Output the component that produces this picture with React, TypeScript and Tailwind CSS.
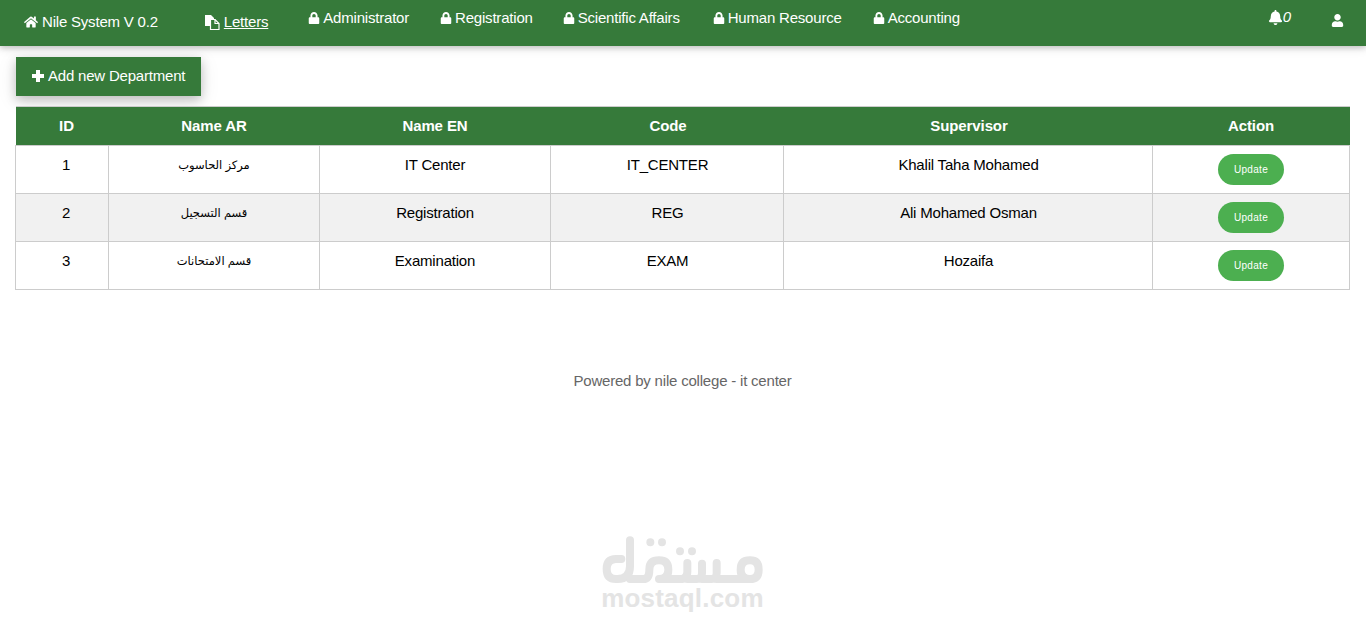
import { FaHome, FaLock, FaBell, FaUser } from "react-icons/fa";

const locked = [
  { name: "Administrator", cls: "ml-[40px]" },
  { name: "Registration", cls: "ml-[31px]" },
  { name: "Scientific Affairs", cls: "ml-[30px]" },
  { name: "Human Resource", cls: "ml-[33px]" },
  { name: "Accounting", cls: "ml-[31px]" },
];

const rows = [
  { id: "1", ar: "مركز الحاسوب", en: "IT Center", code: "IT_CENTER", sup: "Khalil Taha Mohamed" },
  { id: "2", ar: "قسم التسجيل", en: "Registration", code: "REG", sup: "Ali Mohamed Osman" },
  { id: "3", ar: "قسم الامتحانات", en: "Examination", code: "EXAM", sup: "Hozaifa" },
];

const headers = [
  { t: "ID", w: "w-[93px] pl-[9px]" },
  { t: "Name AR", w: "w-[211px]" },
  { t: "Name EN", w: "w-[231px]" },
  { t: "Code", w: "w-[233px] pl-[2px]" },
  { t: "Supervisor", w: "w-[369px] pl-[2px]" },
  { t: "Action", w: "w-[197px]" },
];

const td = "border border-[#cccccc] align-top pt-[8px] pb-0 text-center h-[48px]";

function FilesIcon() {
  return (
    <svg width="16" height="16" viewBox="0 0 16 16" aria-hidden="true">
      <path d="M1 1 H7 L10 4 V12 H1 Z" fill="#ffffff" />
      <path d="M6.5 5.5 H11 L15 9.5 V15.5 H6.5 Z" fill="#367a3a" stroke="#ffffff" strokeWidth="1.2" />
      <path d="M11 5.5 V9.5 H15" fill="none" stroke="#ffffff" strokeWidth="1.2" />
    </svg>
  );
}

function PlusIcon() {
  return (
    <svg width="12" height="12" viewBox="0 0 12 12" aria-hidden="true">
      <path d="M4 0 H8 V4 H12 V8 H8 V12 H4 V8 H0 V4 H4 Z" fill="#ffffff" />
    </svg>
  );
}

function MostaqlLogo() {
  return (
    <svg width="170" height="52" viewBox="60 40 510 156" fill="none" stroke="#e4e4e4" strokeWidth="24" strokeLinecap="round" strokeLinejoin="round" aria-hidden="true">
      <path d="M150 62 V140 Q150 178 112 178 H108 Q80 178 80 148 Q80 118 108 118 H124" />
      <path d="M150 178 H190 M285 178 H300 Q322 178 322 156 V130" />
      <path d="M190 178 Q208 178 208 150 Q208 122 237 122 Q265 122 265 150 Q265 178 237 178 H285" />
      <path d="M322 178 H350 Q366 178 366 160 V132 M366 178 H394 Q410 178 410 160 V130" />
      <path d="M410 178 H510 Q536 178 536 150 Q536 122 510 122 Q482 122 482 150 Q482 178 510 178" />
      <circle cx="211" cy="68" r="10" fill="#e4e4e4" strokeWidth="4" />
      <circle cx="246" cy="68" r="10" fill="#e4e4e4" strokeWidth="4" />
      <circle cx="300" cy="95" r="10" fill="#e4e4e4" strokeWidth="4" />
      <circle cx="336" cy="95" r="10" fill="#e4e4e4" strokeWidth="4" />
    </svg>
  );
}

export default function App() {
  return (
    <div className="min-h-[624px] bg-white text-black text-[15px] leading-[22px] tracking-[-0.2px] font-['Liberation_Sans','DejaVu_Sans',sans-serif]">
      <nav className="h-[46px] bg-[#367a3a] text-white flex items-start pl-6 pr-[22px] shadow-[0_2px_5px_rgba(0,0,0,0.16),0_2px_10px_rgba(0,0,0,0.12)]">
        <a className="flex items-center gap-[4px] pt-[11px]">
          <FaHome className="text-[14px]" />
          <span>Nile System V 0.2</span>
        </a>
        <a className="flex items-center ml-[46px] pt-[11px] underline">
          <FilesIcon />
          <span className="pl-[4px]">Letters</span>
        </a>
        {locked.map((l) => (
          <a key={l.name} className={`flex items-center gap-[3px] pt-[7px] ${l.cls}`}>
            <FaLock className="text-[12px]" />
            <span>{l.name}</span>
          </a>
        ))}
        <a className="flex items-center ml-auto pt-[6px]">
          <FaBell className="text-[15px]" />
          <i>0</i>
        </a>
        <a className="ml-[40px] pt-[14px]">
          <FaUser className="text-[13px]" />
        </a>
      </nav>

      <div className="px-[15px] pt-[11px]">
        <button className="flex items-center gap-[4px] h-[39px] ml-px pb-[2px] px-4 bg-[#367a3a] text-white shadow-[0_4px_10px_rgba(0,0,0,0.2),0_4px_20px_rgba(0,0,0,0.1)]">
          <PlusIcon />
          <span>Add new Department</span>
        </button>

        <table className="mt-[10px] w-[1334px] table-fixed border-collapse">
          <thead>
            <tr className="bg-[#367a3a] text-white h-[39px] border-t border-[#cccccc]">
              {headers.map((h) => (
                <th key={h.t} className={`${h.w} font-bold text-center align-middle tracking-[-0.1px]`}>{h.t}</th>
              ))}
            </tr>
          </thead>
          <tbody>
            {rows.map((r, i) => (
              <tr key={r.id} className={i === 1 ? "bg-[#f1f1f1]" : "bg-white"}>
                <td className={`${td} pl-[8px]`}>{r.id}</td>
                <td className={`${td} text-[11.5px]`}>{r.ar}</td>
                <td className={td}>{r.en}</td>
                <td className={`${td} pl-[1px]`}>{r.code}</td>
                <td className={`${td} pl-[1px]`}>{r.sup}</td>
                <td className={td}>
                  <span className="inline-flex items-center justify-center w-[66px] h-[31px] rounded-full bg-[#4caf50] text-white text-[10px] leading-none tracking-[0.3px]">Update</span>
                </td>
              </tr>
            ))}
          </tbody>
        </table>

        <p className="mt-[80px] text-center text-[#666666] pr-[1px]">Powered by nile college - it center</p>

        <div className="mt-[141px] flex flex-col items-center text-[#e4e4e4] pr-px">
          <div className="ml-[4px]">
            <MostaqlLogo />
          </div>
          <div className="text-[26px] leading-[26px] font-bold tracking-[0.2px]">mostaql.com</div>
        </div>
      </div>
    </div>
  );
}
